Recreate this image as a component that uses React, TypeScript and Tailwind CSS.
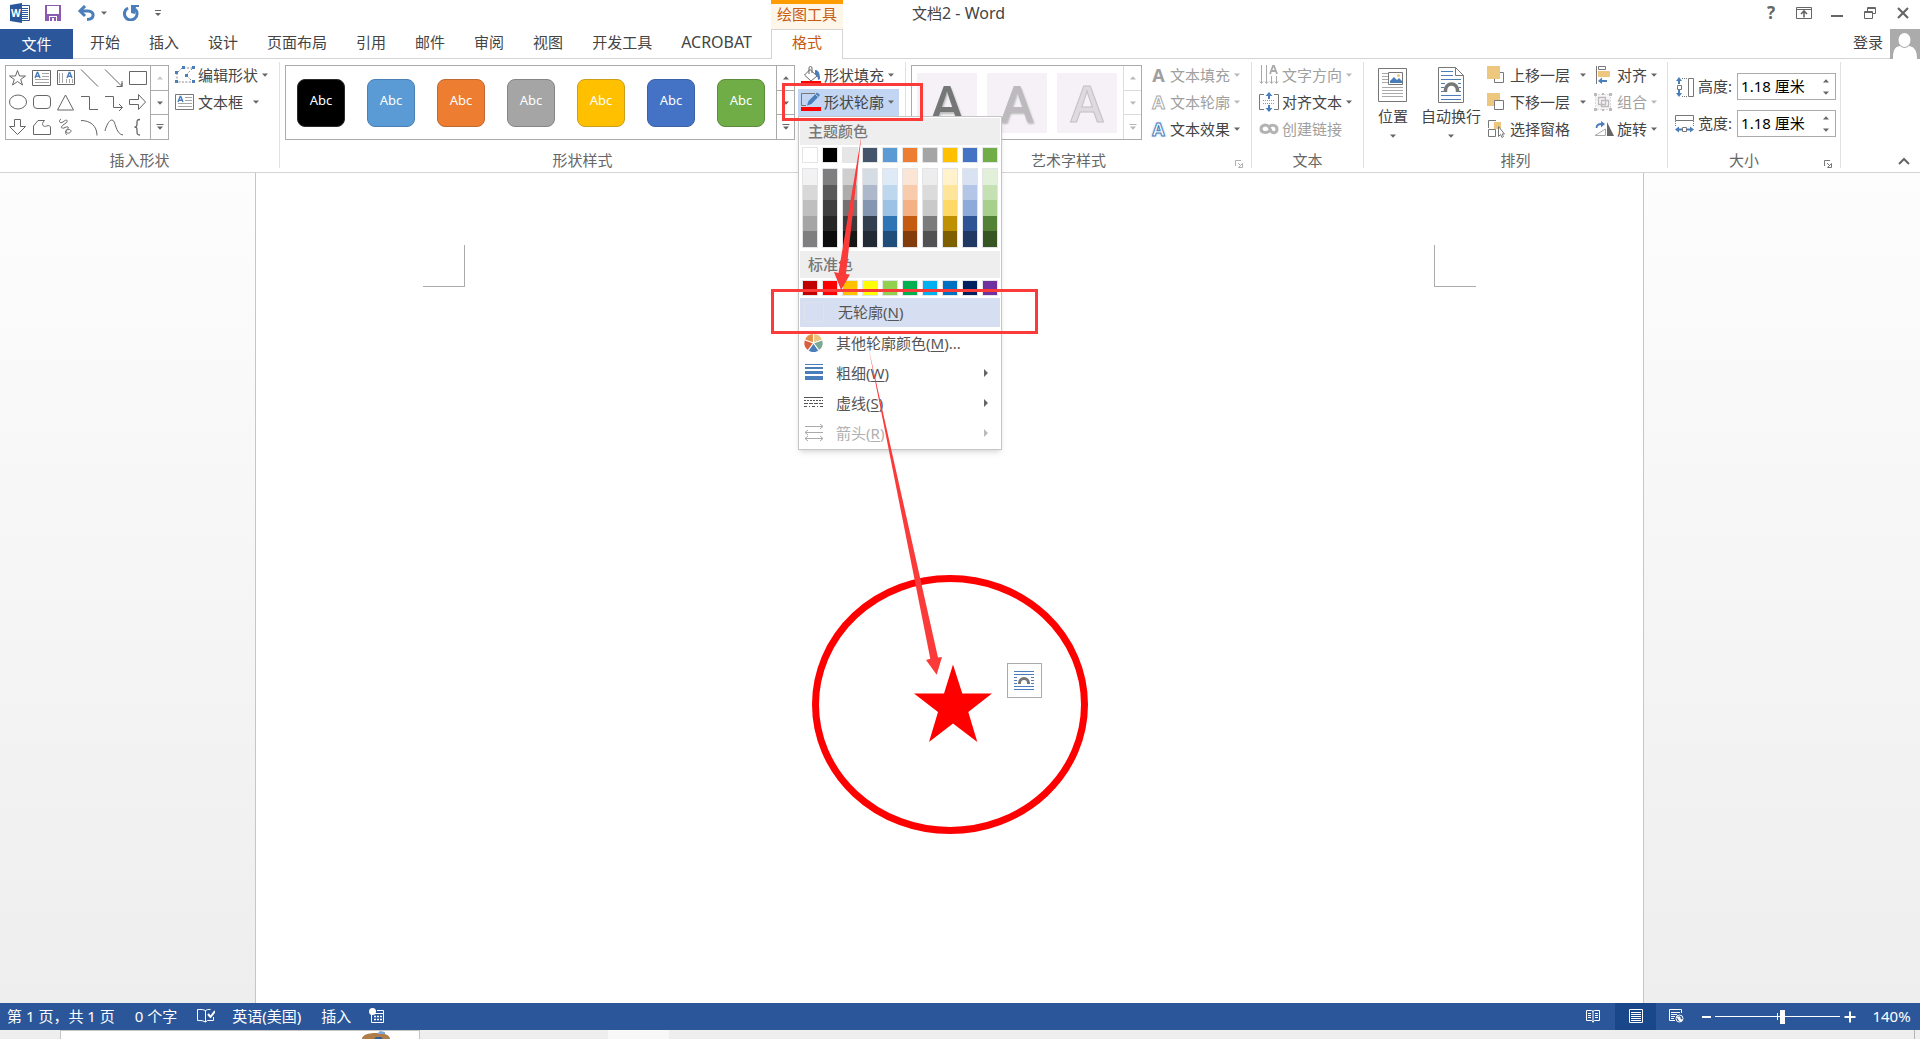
import React, { useState } from 'react';
import clsx from 'clsx';

const BLUE = '#4a7ebb';

interface CaretProps {
  light?: boolean;
  className?: string;
}

const Caret: React.FC<CaretProps> = ({ light, className }) => (
  <svg
    viewBox="0 0 6 4"
    className={clsx('w-[6px] h-1 shrink-0', light ? 'text-[#b8b8b8]' : 'text-[#666]', className)}
  >
    <path d="M0 .5h6L3 3.8z" fill="currentColor" />
  </svg>
);

const Launcher: React.FC<{ light?: boolean }> = ({ light }) => (
  <button aria-label="More options" className={clsx('w-5 pl-1', light ? 'text-[#b0b0b0]' : 'text-[#777]')}>
    <svg viewBox="0 0 8 8" className="w-2 h-2">
      <path d="M.5 6V.5H6M3 3l3 3M7.500 3.500v4h-4z" fill="none" stroke="currentColor" />
    </svg>
  </button>
);

interface GroupProps {
  title: string;
  className?: string;
  launcher?: 'dark' | 'light' | 'hidden';
  children: React.ReactNode;
}

const Group: React.FC<GroupProps> = ({ title, className, launcher, children }) => (
  <section className="flex flex-col shrink-0 border-r border-[#e1e1e1]">
    <div className={clsx('flex h-[81px]', className)}>{children}</div>
    <div className="flex items-end h-[25px]">
      <h2 className="flex-1 text-center leading-4 text-[#666]">{title}</h2>
      {launcher === 'hidden' && <span className="w-5" />}
      {launcher && launcher !== 'hidden' && <Launcher light={launcher === 'light'} />}
    </div>
  </section>
);

interface ToolProps {
  icon: React.ReactNode;
  label: string;
  disabled?: boolean;
  caret?: boolean;
  wide?: boolean;
}

const Tool: React.FC<ToolProps> = ({ icon, label, disabled, caret = true, wide }) => (
  <button
    disabled={disabled}
    className={clsx('flex items-center h-[27px] pb-[2px] whitespace-nowrap', disabled ? 'text-[#a0a0a0]' : 'text-[#444]')}
  >
    <span className="w-5 mr-[3px] shrink-0">{icon}</span>
    {label}
    {caret && <Caret light={disabled} className={wide ? 'ml-[10px]' : 'ml-1'} />}
  </button>
);

const Scroller: React.FC<{ light?: boolean; firstLight?: boolean }> = ({ light, firstLight }) => {
  const line = light ? 'border-[#dcdcdc]' : 'border-[#ababab]';
  const color = light ? 'text-[#b8b8b8]' : 'text-[#666]';
  return (
    <div className={clsx('flex flex-col w-[18px] border-l', line)}>
      <button aria-label="Scroll up" className="flex-1 flex items-center justify-center">
        <svg viewBox="0 0 6 4" className={clsx('w-[6px] h-1', firstLight ? 'text-[#c8c8c8]' : color)}>
          <path d="M0 3.500h6L3 .2z" fill="currentColor" />
        </svg>
      </button>
      <button aria-label="Scroll down" className={clsx('flex-1 flex items-center justify-center border-y', line)}>
        <Caret light={light} />
      </button>
      <button aria-label="More" className="flex-1 flex items-center justify-center">
        <svg viewBox="0 0 8 6" className={clsx('w-2 h-[6px]', color)}>
          <path d="M.5 0h7v1h-7zM1 2.500h6L4 5.800z" fill="currentColor" />
        </svg>
      </button>
    </div>
  );
};

/* ---------- insert shapes gallery ---------- */

const TextBoxIcon = () => (
  <svg viewBox="0 0 20 18" className="w-5 h-[18px]">
    <path d="M.5 1.500h18v15H.5z" fill="#fff" stroke="#777" />
    <path d="M10 4.500h7M10 7.500h7M3 10.500h14M3 13.500h14" stroke="#a6a6a6" />
    <path d="M3 9l2.200-5.500h.6L8 9M4 7.200h3" fill="none" stroke={BLUE} strokeWidth="1.400" />
  </svg>
);

const shapes: { name: string; d: React.ReactNode }[] = [
  { name: 'Star', d: <path d="M9.500 1.500l2 5.500h6l-4.800 3.400 1.800 5.600-5-3.500-5 3.500 1.800-5.600L1.500 7h6z" /> },
  {
    name: 'Text box',
    d: (
      <>
        <path d="M.5 1.500h18v15H.5z" />
        <path d="M10 4.500h7M10 7.500h7M3 10.500h14M3 13.500h14" stroke="#a6a6a6" />
        <path d="M3 9l2.200-5.500h.6L8 9M4 7.200h3" stroke={BLUE} strokeWidth="1.400" />
      </>
    ),
  },
  {
    name: 'Vertical text box',
    d: (
      <>
        <path d="M1.500 1.500h17v14h-17z" />
        <path d="M3.500 4v10M6.500 4v10M10.500 10v4M13.500 10v4M16.500 10v4" stroke="#a6a6a6" />
        <path d="M11 9l2.200-5.500h.6L16 9M12 7.200h3" stroke={BLUE} strokeWidth="1.400" />
      </>
    ),
  },
  { name: 'Line', d: <path d="M1 .5l17 17" /> },
  { name: 'Arrow', d: <path d="M1 .5l17 17M18 12v5.500h-5.500M18 14v3.500h-3.500" /> },
  { name: 'Rectangle', d: <path d="M1.500 2.500h17v13h-17z" /> },
  { name: 'Oval', d: <ellipse cx="10" cy="9" rx="8.500" ry="7" /> },
  { name: 'Rounded rectangle', d: <rect x="1.500" y="2.500" width="17" height="13" rx="3.500" /> },
  { name: 'Triangle', d: <path d="M9.500 2l8 15h-16z" /> },
  { name: 'Elbow', d: <path d="M1 3.500h8.500v13H18" /> },
  { name: 'Elbow arrow', d: <path d="M1 3.500h8.500v11H18M15 11l3.500 3.500L15 18" /> },
  { name: 'Right arrow', d: <path d="M1.500 6.500h9v-5l7 7.500-7 7.500v-5h-9z" /> },
  { name: 'Down arrow', d: <path d="M6.500 1.500h6v7h5l-8 8-8-8h5z" /> },
  { name: 'Freeform', d: <path d="M1.500 16.500V8l4.500-5.500h6.500c-4 4-1 7 2 5.500 3-1 4 0 4 2v6.500z" /> },
  {
    name: 'Scribble',
    d: <path d="M5 1c-3 2-1 5 2 3 3-3 6-2 3 1-3 2-6 4-4 5s4-2 6-1-3 3-2 5 5 1 5-1-4-2-5 0 0 3 1 4" />,
  },
  { name: 'Arc', d: <path d="M1 2.500c9 0 16 5 16 15" /> },
  { name: 'Curve', d: <path d="M1 13C3 5 6 2 8 2c4 0 3 14 11 15" /> },
  { name: 'Brace', d: <path d="M12 1.500c-3 0-3 1-3 3.500s0 4-2.500 4C9 9 9 10.500 9 13s0 4 3 4" strokeWidth="1.300" /> },
];

const ShapeGallery = () => (
  <div className="flex self-center h-[75px] border border-[#ababab]">
    <div className="grid grid-cols-6 grid-rows-3 w-36">
      {shapes.map((s) => (
        <button key={s.name} aria-label={s.name} className="flex items-center justify-center">
          <svg viewBox="0 0 20 18" className="w-5 h-[18px]" fill="none" stroke="#666">
            {s.d}
          </svg>
        </button>
      ))}
    </div>
    <Scroller firstLight />
  </div>
);

const EditShapeIcon = () => (
  <svg viewBox="0 0 20 18" className="w-5 h-[18px]">
    <path d="M2 16V7l5-5h11l-7 7 7 7z" fill="none" stroke="#888" strokeDasharray="2 1.500" />
    <path d="M0 5h3v3H0zM7 0h3v3H7zM17 0h3v3h-3zM10 8h3v3h-3zM0 14h3v3H0zM17 14h3v3h-3z" fill={BLUE} />
  </svg>
);

/* ---------- shape styles ---------- */

const presets = [
  'bg-black border-[#2b2b2b]',
  'bg-[#5b9bd5] border-[#4a80b3]',
  'bg-[#ed7d31] border-[#bf6a33]',
  'bg-[#a5a5a5] border-[#858585]',
  'bg-[#ffc000] border-[#cc9f1a]',
  'bg-[#4472c4] border-[#3b62a6]',
  'bg-[#70ad47] border-[#5b8c3b]',
];

const FillIcon = () => (
  <svg viewBox="0 0 20 18" className="w-5 h-[18px]">
    <path d="M9 3.500l7 6.500-6 5-6.500-6z" fill="#fff" stroke="#666" />
    <path d="M8 8V2q0-1.500 1.500-1.500T11 2v5" fill="none" stroke="#666" />
    <path d="M14 4c3 0 5 2 5 9l-2 1c0-3-1-4-3-6z" fill={BLUE} />
    <path d="M0 15h20v3H0z" fill="#f00" />
  </svg>
);

const OutlineIcon = () => (
  <svg viewBox="0 0 20 19" className="w-5 h-[19px]">
    <path d="M14 1.500H.5v12H5" fill="none" stroke="#777" />
    <path d="M6 13.500l1.500-4.500L16 .5l3 2.500-8.500 9z" fill={BLUE} />
    <path d="M14.500 2.500l2.500 2" stroke="#fff" strokeWidth=".7" />
    <path d="M0 15h20v4H0z" fill="#f00" />
  </svg>
);

const themeColors = [
  ['bg-white', 'bg-[#f2f2f2]', 'bg-[#d8d8d8]', 'bg-[#bfbfbf]', 'bg-[#a5a5a5]', 'bg-[#7f7f7f]'],
  ['bg-black', 'bg-[#7f7f7f]', 'bg-[#595959]', 'bg-[#3f3f3f]', 'bg-[#262626]', 'bg-[#0c0c0c]'],
  ['bg-[#e7e6e6]', 'bg-[#d0cece]', 'bg-[#aeabab]', 'bg-[#757070]', 'bg-[#3a3838]', 'bg-[#171616]'],
  ['bg-[#44546a]', 'bg-[#d6dce4]', 'bg-[#adb9ca]', 'bg-[#8496b0]', 'bg-[#323f4f]', 'bg-[#222a35]'],
  ['bg-[#5b9bd5]', 'bg-[#deebf6]', 'bg-[#bdd7ee]', 'bg-[#9cc3e5]', 'bg-[#2e75b5]', 'bg-[#1e4e79]'],
  ['bg-[#ed7d31]', 'bg-[#fbe5d5]', 'bg-[#f7cbac]', 'bg-[#f4b183]', 'bg-[#c55a11]', 'bg-[#833c0b]'],
  ['bg-[#a5a5a5]', 'bg-[#ededed]', 'bg-[#dbdbdb]', 'bg-[#c9c9c9]', 'bg-[#7b7b7b]', 'bg-[#525252]'],
  ['bg-[#ffc000]', 'bg-[#fff2cc]', 'bg-[#fee599]', 'bg-[#ffd965]', 'bg-[#bf9000]', 'bg-[#7f6000]'],
  ['bg-[#4472c4]', 'bg-[#d9e2f3]', 'bg-[#b4c6e7]', 'bg-[#8eaadb]', 'bg-[#2f5496]', 'bg-[#1f3864]'],
  ['bg-[#70ad47]', 'bg-[#e2efd9]', 'bg-[#c5e0b3]', 'bg-[#a8d08d]', 'bg-[#538135]', 'bg-[#375623]'],
];

const standardColors = [
  'bg-[#c00000]',
  'bg-[#ff0000]',
  'bg-[#ffc000]',
  'bg-[#ffff00]',
  'bg-[#92d050]',
  'bg-[#00b050]',
  'bg-[#00b0f0]',
  'bg-[#0070c0]',
  'bg-[#002060]',
  'bg-[#7030a0]',
];

const menuItems = [
  {
    label: '其他轮廓颜色',
    hotkey: 'M',
    tail: '...',
    arrow: false,
    disabled: false,
    icon: (
      <g>
        <path d="M9.500 9L9.500 0A9 9 0 0 1 18 6z" fill="#ecc57c" />
        <path d="M9.500 9L18 6a9 9 0 0 1-3.200 10.300z" fill="#7aa895" />
        <path d="M9.500 9l5.300 7.300a9 9 0 0 1-10.600 0z" fill={BLUE} />
        <path d="M9.500 9l-5.300 7.300A9 9 0 0 1 1 6z" fill="#d75f3c" />
        <path d="M9.500 9L1 6a9 9 0 0 1 8.500-6z" fill="#e58f44" />
        <path d="M9.500 9V0M9.500 9L18 6M9.500 9l5.300 7.300M9.500 9l-5.300 7.300M9.500 9L1 6" stroke="#fff" strokeWidth="1.200" />
      </g>
    ),
  },
  {
    label: '粗细',
    hotkey: 'W',
    tail: '',
    arrow: true,
    disabled: false,
    icon: <path d="M1 0h18v1H1zM1 3h18v2H1zM1 7h18v3H1zM1 12h18v4H1z" fill={BLUE} />,
  },
  {
    label: '虚线',
    hotkey: 'S',
    tail: '',
    arrow: true,
    disabled: false,
    icon: (
      <g stroke="#555">
        <path d="M0 3.500h19" />
        <path d="M0 6.500h19" strokeDasharray="2 1" />
        <path d="M0 9.500h19" strokeDasharray="4 1" />
        <path d="M0 12.500h19" strokeDasharray="3 2 1 2" />
      </g>
    ),
  },
  {
    label: '箭头',
    hotkey: 'R',
    tail: '',
    arrow: true,
    disabled: true,
    icon: (
      <path d="M1 2.500h18M16 0l3 2.500L16 5M1 8.500h18M4 6L1 8.500 4 11M1 14.500h18M4 12l-3 2.500L4 17M16 12l3 2.500-3 2.500" fill="none" stroke="#aaa" />
    ),
  },
];

const OutlineMenu = () => (
  <div className="absolute top-full left-0 z-20 w-[204px] p-px pb-px bg-white border border-[#c6c6c6] shadow-md text-[#555]">
    <h3 className="h-[27px] pl-2 leading-[27px] bg-[#eee] font-medium text-[#777]">主题颜色</h3>
    <div className="flex justify-between px-[2px] pt-[2px]">
      {themeColors.map(([base]) => (
        <button key={base} aria-label="Theme colour" className={clsx('size-4 border border-[#e2e4e7]', base)} />
      ))}
    </div>
    <div className="flex justify-between px-[2px] pt-[5px] pb-[3px]">
      {themeColors.map(([base, ...shades]) => (
        <div key={base} className="flex flex-col w-4 h-20 border border-[#e2e4e7]">
          {shades.map((shade) => (
            <button key={shade} aria-label="Theme shade" className={clsx('flex-1', shade)} />
          ))}
        </div>
      ))}
    </div>
    <h3 className="h-[27px] pl-2 leading-[27px] bg-[#eee] font-medium text-[#777]">标准色</h3>
    <div className="flex justify-between px-[2px] py-[2px]">
      {standardColors.map((color) => (
        <button key={color} aria-label="Standard colour" className={clsx('size-4 border border-[#e2e4e7]', color)} />
      ))}
    </div>
    <button className="flex items-center w-full h-[29px] pl-1 pb-[2px] bg-[#d5dff1]">
      <span className="size-5 mr-[14px] border border-[#dfe2ea]" />
      <span>
        无轮廓(<u className="underline-offset-2">N</u>)
      </span>
    </button>
    <ul className="pt-px">
      {menuItems.map((item) => (
        <li key={item.label}>
          <button
            disabled={item.disabled}
            className={clsx('flex items-center w-full h-[30px] pl-1 pb-px', item.disabled && 'text-[#b0b0b0]')}
          >
            <svg viewBox="0 0 20 18" className="w-5 h-[18px] mr-3">
              {item.icon}
            </svg>
            <span>
              {item.label}(<u className="underline-offset-2">{item.hotkey}</u>){item.tail}
            </span>
            {item.arrow && (
              <svg viewBox="0 0 4 8" className="w-1 h-2 ml-auto mr-3">
                <path d="M0 0l4 4-4 4z" fill={item.disabled ? '#bbb' : '#666'} />
              </svg>
            )}
          </button>
        </li>
      ))}
    </ul>
  </div>
);

const ShapeStyles = () => (
  <Group title="形状样式" launcher="hidden" className="pl-[5px] pr-[6px]">
    <div className="flex self-center h-[75px] border border-[#ababab]">
      <div className="flex items-center gap-[22px] px-[11px]">
        {presets.map((p) => (
          <button key={p} className={clsx('size-12 rounded-lg border text-white text-[13px] leading-10 pb-[6px]', p)}>
            Abc
          </button>
        ))}
      </div>
      <Scroller />
    </div>
    <div className="flex flex-col ml-[3px]">
      <div className="pl-[3px]">
        <Tool icon={<FillIcon />} label="形状填充" />
      </div>
      <div className="relative">
        <button className="flex items-center h-[27px] w-[101px] pl-[3px] pb-[2px] bg-[#c2d5f2] text-[#444] whitespace-nowrap">
          <span className="w-5 mr-[3px]">
            <OutlineIcon />
          </span>
          形状轮廓
          <Caret className="ml-1" />
        </button>
        <OutlineMenu />
      </div>
    </div>
  </Group>
);

/* ---------- wordart + text ---------- */

const letterStyles = [
  'text-[#757777] [text-shadow:1px_2px_2px_#bbb]',
  'text-[#bcbabd] [text-shadow:1px_2px_2px_#bbb]',
  'text-[#dedadf] [-webkit-text-stroke:1px_#c4c0c5]',
];

const DirectionIcon = () => (
  <svg viewBox="0 0 20 20" className="w-5 h-5" fill="none" stroke="#aaa">
    <path d="M2.500 0v18M7.500 0v18M12.500 11v7M17.500 11v7M1 16.500l1.500 2 1.500-2M6 16.500l1.500 2 1.500-2M11 16.500l1.500 2 1.500-2M16 16.500l1.500 2 1.500-2" />
    <path d="M11 9l3-8h1l3 8M12 6h5" strokeWidth="1.800" />
  </svg>
);

const AlignTextIcon = () => (
  <svg viewBox="0 0 20 20" className="w-5 h-5" fill="none" stroke="#777">
    <path d="M5 2.500H.5v15H5M15 2.500h4.500v15H15" />
    <path d="M4 8.500h12M4 11.500h12" stroke="#999" strokeDasharray="1 1" />
    <path d="M10 0L6.500 4H9v3h2V4h2.500zM10 20l-3.500-4H9v-3h2v3h2.500z" fill={BLUE} stroke="none" />
  </svg>
);

const LinkIcon = () => (
  <svg viewBox="0 0 20 12" className="w-5 h-3" fill="none" stroke="#b3b3b3" strokeWidth="3">
    <path d="M10.500 7.500C9 10 2 10.500 2 6s6-5 8-2l2 4c2 3 6 2 6-2s-6-5-8-2" />
  </svg>
);

/* ---------- arrange ---------- */

const PositionIcon = () => (
  <svg viewBox="0 0 30 36" className="w-[30px] h-9">
    <path d="M.5 1.500h28v33H.5z" fill="#fff" stroke="#777" />
    <path d="M4 6.500h6M4 9.500h6M4 12.500h6M4 15.500h6M4 20.500h21M4 23.500h21M4 26.500h21M4 29.500h21" stroke="#aaa" />
    <path d="M10.500 5.500h14v12h-14z" fill="#fff" stroke="#777" />
    <path d="M12 16v-2l4-4 3 3 2-2 3 3v2z" fill={BLUE} />
    <circle cx="20.500" cy="8.500" r="1.500" fill="#ecc57c" />
  </svg>
);

const WrapIcon = () => (
  <svg viewBox="0 0 28 36" className="w-7 h-9">
    <path d="M1.500.5h17l8 8v27h-25z" fill="#fff" stroke="#777" />
    <path d="M18.500.5v8h8" fill="none" stroke="#777" />
    <path d="M4 4.500h12M4 8.500h12M4 12.500h20M4 16.500h4M21 16.500h3M4 20.500h3M22 20.500h2M4 24.500h4M21 24.500h3M4 28.500h20M4 32.500h20" stroke={BLUE} />
    <path d="M8.500 25v-2a5.500 5.500 0 0 1 12 0v2" fill="none" stroke="#777" strokeWidth="3.500" />
  </svg>
);

const ForwardIcon = () => (
  <svg viewBox="0 0 18 18" className="w-[18px] h-[18px]">
    <path d="M13 6.500h3.500v10h-9V13" fill="none" stroke="#777" />
    <path d="M0 0h13v13H0z" fill="#eec77f" />
  </svg>
);

const BackwardIcon = () => (
  <svg viewBox="0 0 18 18" className="w-[18px] h-[18px]">
    <path d="M0 0h13v13H0z" fill="#eec77f" />
    <path d="M7.500 7.500h9v9h-9z" fill="#fff" stroke="#777" />
  </svg>
);

const PaneIcon = () => (
  <svg viewBox="0 0 18 18" className="w-[18px] h-[18px]">
    <path d="M7 2h7v7H7z" fill="#eec77f" />
    <path d="M1.500 8V.5H9M1.500 9.500h7v7h-7z" fill="none" stroke="#777" />
    <path d="M11.500 6.500v10l2-2 1.500 3 1.500-1-1.500-2.500h2.500z" fill="#fff" stroke="#777" />
  </svg>
);

const AlignIcon = () => (
  <svg viewBox="0 0 18 18" className="w-[18px] h-[18px]">
    <path d="M2.500 0v18M4.500.5h7v3h-7z" fill="none" stroke="#777" />
    <path d="M4 5h12v6H4z" fill="#eec77f" />
    <path d="M4 15l4-3.500v2.500h5v2H8v2z" fill={BLUE} />
  </svg>
);

const GroupIcon = () => (
  <svg viewBox="0 0 18 18" className="w-[18px] h-[18px]" fill="none" stroke="#bbb">
    <path d="M1.500 1.500h15v15h-15z" strokeDasharray="1 2" fill="#f8f4f8" />
    <path d="M4.500 4.500h7v7h-7zM7.500 7.500h7v6h-7z" strokeWidth="1.300" />
    <path d="M0 0h3v3H0zM15 0h3v3h-3zM0 15h3v3H0zM15 15h3v3h-3zM8 0h2v2H8zM8 16h2v2H8z" fill="#bbb" stroke="none" />
  </svg>
);

const RotateIcon = () => (
  <svg viewBox="0 0 20 16" className="w-5 h-4">
    <path d="M1 14.500L11.500 8v6.500z" fill="#fff" stroke="#aaa" />
    <path d="M13 1l7 14h-7z" fill="#666" />
    <path d="M2.500 7c0-3 2-4 5-4" fill="none" stroke={BLUE} strokeWidth="1.800" />
    <path d="M7 0l4 3-4 3.500z" fill={BLUE} />
  </svg>
);

const BigButton: React.FC<{ icon: React.ReactNode; label: string }> = ({ icon, label }) => (
  <button className="flex flex-col items-center text-[#444] whitespace-nowrap">
    {icon}
    <span className="mt-[3px] leading-5">{label}</span>
    <Caret className="mt-2" />
  </button>
);

/* ---------- size ---------- */

const HeightIcon = () => (
  <svg viewBox="0 0 20 20" className="w-5 h-5">
    <path d="M4 0L1 4h2v3h2V4h2zM4 20l-3-4h2v-3h2v3h2z" fill={BLUE} />
    <path d="M2.500 8.500h4v4h-4zM13.500 1.500h5v18h-5z" fill="none" stroke="#777" />
    <path d="M7 1.500h6M7 19.500h6" stroke="#777" strokeDasharray="1 1" />
  </svg>
);

const WidthIcon = () => (
  <svg viewBox="0 0 20 20" className="w-5 h-5">
    <path d="M.5 1.500h18v5H.5z" fill="none" stroke="#777" />
    <path d="M.5 7v6M18.500 7v6" stroke="#777" strokeDasharray="1 1" />
    <path d="M0 15.500l4-3v2h3v2H4v2zM19 15.500l-4-3v2h-3v2h3v2z" fill={BLUE} />
    <path d="M7.500 13.500h4v4h-4z" fill="#fff" stroke="#777" />
  </svg>
);

interface SizeFieldProps {
  id: string;
  label: string;
  icon: React.ReactNode;
}

const SizeField: React.FC<SizeFieldProps> = ({ id, label, icon }) => {
  const [value, setValue] = useState('1.18 厘米');

  return (
    <div className="flex items-center h-[27px]">
      {icon}
      <label htmlFor={id} className="w-[39px] ml-[3px] pb-[2px] text-[#444] whitespace-nowrap">
        {label}
      </label>
      <div className="flex w-[99px] h-[27px] border border-[#ababab] bg-white">
        <input
          id={id}
          value={value}
          onChange={(e) => setValue(e.target.value)}
          className="w-20 pl-[3px] pb-[2px] text-black outline-none"
        />
        <div className="flex flex-col justify-center gap-2 pl-[5px]">
          <button aria-label="Increase" className="rotate-180">
            <Caret className="block" />
          </button>
          <button aria-label="Decrease">
            <Caret className="block" />
          </button>
        </div>
      </div>
    </div>
  );
};

const Ribbon = () => (
  <div className="relative z-10 flex pt-[3px] pb-1 bg-white border-b border-[#d4d4d4]">
    <Group title="插入形状" className="pl-[5px] pr-[11px]">
      <ShapeGallery />
      <div className="flex flex-col ml-[6px]">
        <Tool icon={<EditShapeIcon />} label="编辑形状" />
        <Tool icon={<TextBoxIcon />} label="文本框" wide />
      </div>
    </Group>
    <ShapeStyles />
    <Group title="艺术字样式" launcher="light" className="pl-[5px] pr-[11px]">
      <div className="flex self-center h-[75px] border border-[#ababab]">
        <div className="flex items-center gap-[10px] pl-[5px] pr-[6px]">
          {letterStyles.map((s) => (
            <button
              key={s}
              className={clsx("size-[60px] bg-[#f5f1f7] font-['Open_Sans'] font-semibold text-[50px] leading-[60px]", s)}
            >
              A
            </button>
          ))}
        </div>
        <Scroller light />
      </div>
      <div className="flex flex-col ml-[5px]">
        <Tool icon={<span className="block pl-[3px] text-[18px] leading-5 font-bold">A</span>} label="文本填充" disabled />
        <Tool
          icon={<span className="block pl-[3px] text-[18px] leading-5 font-bold text-white [-webkit-text-stroke:1px_#aaa]">A</span>}
          label="文本轮廓"
          disabled
        />
        <Tool
          icon={
            <span className="block pl-[3px] text-[18px] leading-5 font-bold text-white [-webkit-text-stroke:1px_#4a7ebb] [text-shadow:0_0_3px_#7fb2ea]">
              A
            </span>
          }
          label="文本效果"
        />
      </div>
    </Group>
    <Group title="文本" className="pl-[7px] pr-[11px]">
      <div className="flex flex-col">
        <Tool icon={<DirectionIcon />} label="文字方向" disabled />
        <Tool icon={<AlignTextIcon />} label="对齐文本" />
        <Tool icon={<LinkIcon />} label="创建链接" disabled caret={false} />
      </div>
    </Group>
    <Group title="排列" className="pl-[14px] pr-[10px]">
      <div className="flex gap-[13px] pt-[5px] mr-[6px]">
        <BigButton icon={<PositionIcon />} label="位置" />
        <BigButton icon={<WrapIcon />} label="自动换行" />
      </div>
      <div className="flex flex-col mr-2">
        <Tool icon={<ForwardIcon />} label="上移一层" wide />
        <Tool icon={<BackwardIcon />} label="下移一层" wide />
        <Tool icon={<PaneIcon />} label="选择窗格" caret={false} />
      </div>
      <div className="flex flex-col">
        <Tool icon={<AlignIcon />} label="对齐" />
        <Tool icon={<GroupIcon />} label="组合" disabled />
        <Tool icon={<RotateIcon />} label="旋转" />
      </div>
    </Group>
    <Group title="大小" launcher="dark" className="pl-[7px] pr-1">
      <div className="flex flex-col gap-[10px] pt-[11px]">
        <SizeField id="shape-height" label="高度:" icon={<HeightIcon />} />
        <SizeField id="shape-width" label="宽度:" icon={<WidthIcon />} />
      </div>
    </Group>
    <button aria-label="Collapse ribbon" className="self-end ml-auto mr-[10px] mb-[3px]">
      <svg viewBox="0 0 12 8" className="w-3 h-2">
        <path d="M1 7l5-5 5 5" fill="none" stroke="#666" strokeWidth="2" />
      </svg>
    </button>
  </div>
);

/* ---------- title bar and tabs ---------- */

const TitleBar = () => (
  <header className="flex h-[29px]">
    <div className="flex items-center w-[771px] shrink-0 pl-[10px] pb-[3px]">
      <svg viewBox="0 0 20 20" className="w-5 h-5">
        <path d="M9.500 2.500h10v15h-10z" fill="#fff" stroke="#2b579a" />
        <path d="M12 5.500h6M12 7.500h6M12 9.500h6M12 11.500h6M12 13.500h6M12 15.500h6" stroke="#2b579a" />
        <path d="M0 2l12-2v20L0 18z" fill="#2b579a" />
        <text x="1" y="14" fontSize="10" fontWeight="700" fill="#fff">
          W
        </text>
      </svg>
      <button aria-label="Save" className="ml-[15px]">
        <svg viewBox="0 0 16 16" className="block w-4 h-4">
          <path d="M0 0h16v16H0z" fill="#8a5bb0" />
          <path d="M2 1h12v8H2z" fill="#fff" />
          <path d="M4 11h8v5H4z" fill="#fff" />
          <path d="M5 12h6v4H9v-3H7v3H5z" fill="#8a5bb0" />
        </svg>
      </button>
      <button aria-label="Undo" className="flex items-center ml-4">
        <svg viewBox="0 0 18 16" className="w-[18px] h-4" fill="none" stroke={BLUE}>
          <path d="M3 6h8c7 0 7 8-1 8.500" strokeWidth="3" />
          <path d="M8 1L3 6l5 5" strokeWidth="3" />
        </svg>
        <Caret className="ml-[6px]" />
      </button>
      <button aria-label="Redo" className="ml-4">
        <svg viewBox="0 0 16 16" className="block w-4 h-4">
          <path d="M5 3a6.300 6.300 0 1 0 7 1" fill="none" stroke={BLUE} strokeWidth="3" />
          <path d="M8 0h8v2h-3l-1 7-4-1z" fill={BLUE} />
        </svg>
      </button>
      <button aria-label="Customise toolbar" className="ml-4">
        <svg viewBox="0 0 6 6" className="block w-[6px] h-[6px]">
          <path d="M0 0h6v1H0zM0 3h6L3 6z" fill="#666" />
        </svg>
      </button>
    </div>
    <div className="w-[72px] shrink-0 border-t-4 border-[#ff9d00] bg-[#fff6ea] text-center leading-5 text-[#c55a11]">
      绘图工具
    </div>
    <h1 className="pl-[69px] leading-[27px] text-[#444]">
      文档<span className="text-base leading-5">2 - Word</span>
    </h1>
    <div className="flex items-center ml-auto pr-[11px] pb-[3px] text-[#666]">
      <button aria-label="Help" className="w-[10px] text-[17px] leading-4 font-bold">
        ?
      </button>
      <svg viewBox="0 0 16 12" className="w-4 h-3 ml-[20px]" fill="none" stroke="currentColor">
        <path d="M.5.500h15v11H.5zM.5 2.500h15" />
        <path d="M8 10.500V4M5 7l3-3 3 3" strokeWidth="1.600" />
      </svg>
      <svg viewBox="0 0 12 12" className="w-3 h-3 ml-[19px]">
        <path d="M0 8h12v2H0z" fill="currentColor" />
      </svg>
      <svg viewBox="0 0 12 12" className="w-3 h-3 ml-[21px]" fill="none" stroke="currentColor">
        <path d="M3.500 4V.5h8v6H9M3.500 1.500h8M.5 4.500h8v7h-8zM.5 5.500h8" />
      </svg>
      <svg viewBox="0 0 12 12" className="w-3 h-3 ml-[21px]">
        <path d="M1 1l10 10M11 1L1 11" stroke="currentColor" strokeWidth="2.200" />
      </svg>
    </div>
  </header>
);

const tabs = ['开始', '插入', '设计', '页面布局', '引用', '邮件', '审阅', '视图', '开发工具'];

const TabBar = () => (
  <nav className="relative z-10 flex h-[30px] border-b border-[#d4d4d4] text-[#444]">
    <div className="flex w-[771px] shrink-0">
      <button className="w-[73px] h-[30px] pb-px bg-[#2b579a] text-white">文件</button>
      <div className="flex items-center gap-[29px] pl-[17px] pb-1 whitespace-nowrap">
        {tabs.map((tab) => (
          <button key={tab}>{tab}</button>
        ))}
        <button className="text-base leading-5">ACROBAT</button>
      </div>
    </div>
    <button className="w-[72px] h-[30px] pb-[5px] border border-b-0 border-[#d4d4d4] bg-white text-[#c55a11]">格式</button>
    <div className="flex ml-auto">
      <button className="pr-[7px] pb-1">登录</button>
      <svg viewBox="0 0 30 30" className="w-[30px] h-[30px]">
        <path d="M0 0h30v30H0z" fill="#ababab" />
        <ellipse cx="14.500" cy="11" rx="6" ry="7" fill="#fff" />
        <path d="M3 30c0-8 1-12 7-13q4.500 4 9 0c6 1 8 5 8 13z" fill="#fff" />
      </svg>
    </div>
  </nav>
);

/* ---------- document ---------- */

const Workspace = () => (
  <main className="flex-1 min-h-0 pr-[21px] bg-linear-to-b from-[#fdfdfd] to-[#eee]">
    <div className="relative w-[1389px] h-full mx-auto bg-white border-x border-[#c6c6c6]">
      <div className="flex justify-between px-[167px] pt-[72px]">
        <span className="w-[42px] h-[42px] border-r border-b border-[#ababab]" />
        <span className="w-[42px] h-[42px] border-l border-b border-[#ababab]" />
      </div>
      <svg viewBox="0 0 276 260" className="absolute left-[556px] top-[402px] w-[276px] h-[260px]">
        <ellipse cx="138" cy="129.500" rx="134.500" ry="126" fill="none" stroke="#f00" strokeWidth="7" />
        <path d="M141 89.500l9.300 29H180l-23.700 18.500 9 30L141 148.500 117 167l9-30-24-18.500h30z" fill="#f00" />
      </svg>
      <button
        aria-label="Layout options"
        className="absolute left-[751px] top-[490px] flex items-center justify-center size-[35px] border border-[#ababab] bg-white"
      >
        <svg viewBox="0 0 21 21" className="w-[21px] h-[21px]">
          <path d="M0 1.500h20M0 4.500h20M0 7.500h3M17 7.500h3M0 10.500h3M17 10.500h3M0 13.500h3M17 13.500h3M0 16.500h20M0 19.500h20" stroke={BLUE} />
          <path d="M5.500 14v-1a4.500 4.500 0 0 1 9 0v1" fill="none" stroke="#777" strokeWidth="3" />
        </svg>
      </button>
    </div>
  </main>
);

const StatusBar = () => {
  const [zoom, setZoom] = useState(140);

  return (
    <footer className="flex items-center h-[27px] pl-[7px] pr-[9px] bg-[#2b579a] text-white whitespace-nowrap">
      <span className="pb-[2px]">第 1 页，共 1 页</span>
      <span className="pb-[2px] ml-5">0 个字</span>
      <svg viewBox="0 0 18 16" className="w-[18px] h-4 mb-[2px] ml-5" fill="none" stroke="#fff">
        <path d="M8.500 14V2.500Q6 1 .5 1.500v11q5-.5 8 1.500l2-1.500h6V9M8.500 2.500q2-1.500 5-1" />
        <path d="M11 6l2.500 3L18 3" strokeWidth="2" />
      </svg>
      <button className="pb-[2px] ml-[17px]">英语(美国)</button>
      <button className="pb-[2px] ml-5">插入</button>
      <svg viewBox="0 0 16 16" className="w-4 h-4 mb-[2px] ml-[18px]">
        <path d="M2.500 5.500h12v9h-12zM8 2.500h6.500v3" fill="none" stroke="#fff" />
        <circle cx="3.500" cy="3.500" r="3.500" fill="#fff" />
        <path d="M5 8.500h8M5 11.500h8" stroke="#fff" strokeDasharray="2 1" strokeWidth="1.500" />
      </svg>
      <div className="flex items-center ml-auto">
        <button aria-label="Read mode" className="mr-[15px] mb-[2px]">
          <svg viewBox="0 0 14 14" className="block w-[14px] h-[14px]" fill="none" stroke="#fff">
            <path d="M7 1.500v12M.5 1.500h5L7 2.500l1.500-1h5v10h-5L7 13l-1.500-1.500h-5zM2 4.500h3M2 6.500h3M2 8.500h3M9 4.500h3M9 6.500h3M9 8.500h3" />
          </svg>
        </button>
        <button aria-label="Print layout" className="flex items-center justify-center w-[41px] h-[27px] pb-[2px] bg-[#19478a]">
          <svg viewBox="0 0 14 14" className="w-[14px] h-[14px]" fill="none" stroke="#fff">
            <path d="M.5.500h13v13H.5zM2 3.500h10M2 5.500h10M2 7.500h10M2 9.500h10M2 11.500h10" />
          </svg>
        </button>
        <button aria-label="Web layout" className="ml-[13px] mb-[2px]">
          <svg viewBox="0 0 15 14" className="block w-[15px] h-[14px]" fill="none" stroke="#fff">
            <path d="M12.500 4V.5H.5v11H6M2 3.500h9M2 5.500h6M2 7.500h4M2 9.500h3" />
            <circle cx="10.500" cy="9.500" r="3.500" />
            <path d="M8 8h3v2l2 1-2 1.500-2-3z" fill="#fff" />
          </svg>
        </button>
        <button aria-label="Zoom out" className="w-[9px] h-[2px] ml-[18px] bg-white" />
        <div className="relative flex items-center w-[125px] h-[14px] ml-1">
          <span className="absolute left-[62px] w-px h-[7px] bg-white" />
          <input
            type="range"
            aria-label="Zoom"
            min={10}
            max={250}
            value={zoom}
            onChange={(e) => setZoom(Number(e.target.value))}
            className="w-full h-px appearance-none bg-white [&::-webkit-slider-thumb]:appearance-none [&::-webkit-slider-thumb]:w-[5px] [&::-webkit-slider-thumb]:h-[14px] [&::-webkit-slider-thumb]:bg-white"
          />
        </div>
        <button aria-label="Zoom in" className="ml-1">
          <svg viewBox="0 0 12 12" className="block w-3 h-3">
            <path d="M6 .5v11M.5 6h11" stroke="#fff" strokeWidth="2" />
          </svg>
        </button>
        <button className="w-[39px] ml-4 pb-[2px]">{zoom}%</button>
      </div>
    </footer>
  );
};

const Taskbar = () => (
  <div className="flex h-[9px] overflow-hidden bg-[#eee]">
    <div className="w-[360px] ml-[60px] border border-b-0 border-[#c6c6c6] bg-white">
      <svg viewBox="0 0 30 8" className="w-[30px] h-2 ml-[301px]">
        <path d="M0 8c0-4 6-6 14-6s14 2 14 6z" fill="#b07c4a" />
        <path d="M12 8l2-2h5l2 2z" fill="#2f5f9a" />
        <path d="M15 3l3-3 5 1v2z" fill="#7fa6d8" />
      </svg>
    </div>
    <span className="w-[61px] ml-[188px] bg-[#f8f8f8]" />
    <time className="ml-auto mr-[89px] pt-[3px] leading-5 text-black">17:21</time>
    <span className="w-px mr-[5px] bg-[#b5b5b5]" />
  </div>
);

/* red call-outs drawn over the window */
const Annotations = () => (
  <div className="pointer-events-none absolute inset-0 z-30 overflow-hidden">
    <div className="absolute left-[782px] top-[83px] w-[141px] h-[38px] border-3 border-[#fb3a3a]" />
    <div className="absolute left-[771px] top-[289px] w-[267px] h-[45px] border-3 border-[#fb3a3a]" />
    <svg viewBox="0 0 200 560" className="absolute left-[771px] top-[130px] w-[200px] h-[560px]" fill="#fb3a3a">
      <path d="M90.500 5L75 144l4 .5L70 160l-7-18 4.500 1z" />
      <path d="M97.500 218l69.500 309.500 4-.5-5.300 17.700L155 530l4.300-1.300z" />
    </svg>
  </div>
);

const App: React.FC = () => {
  return (
    <div className="relative flex flex-col h-screen overflow-hidden bg-white text-[15px] leading-5 font-['Noto_Sans','Noto_Sans_CJK_SC',sans-serif]">
      <TitleBar />
      <TabBar />
      <Ribbon />
      <Workspace />
      <StatusBar />
      <Taskbar />
      <Annotations />
    </div>
  );
};

export default App;
